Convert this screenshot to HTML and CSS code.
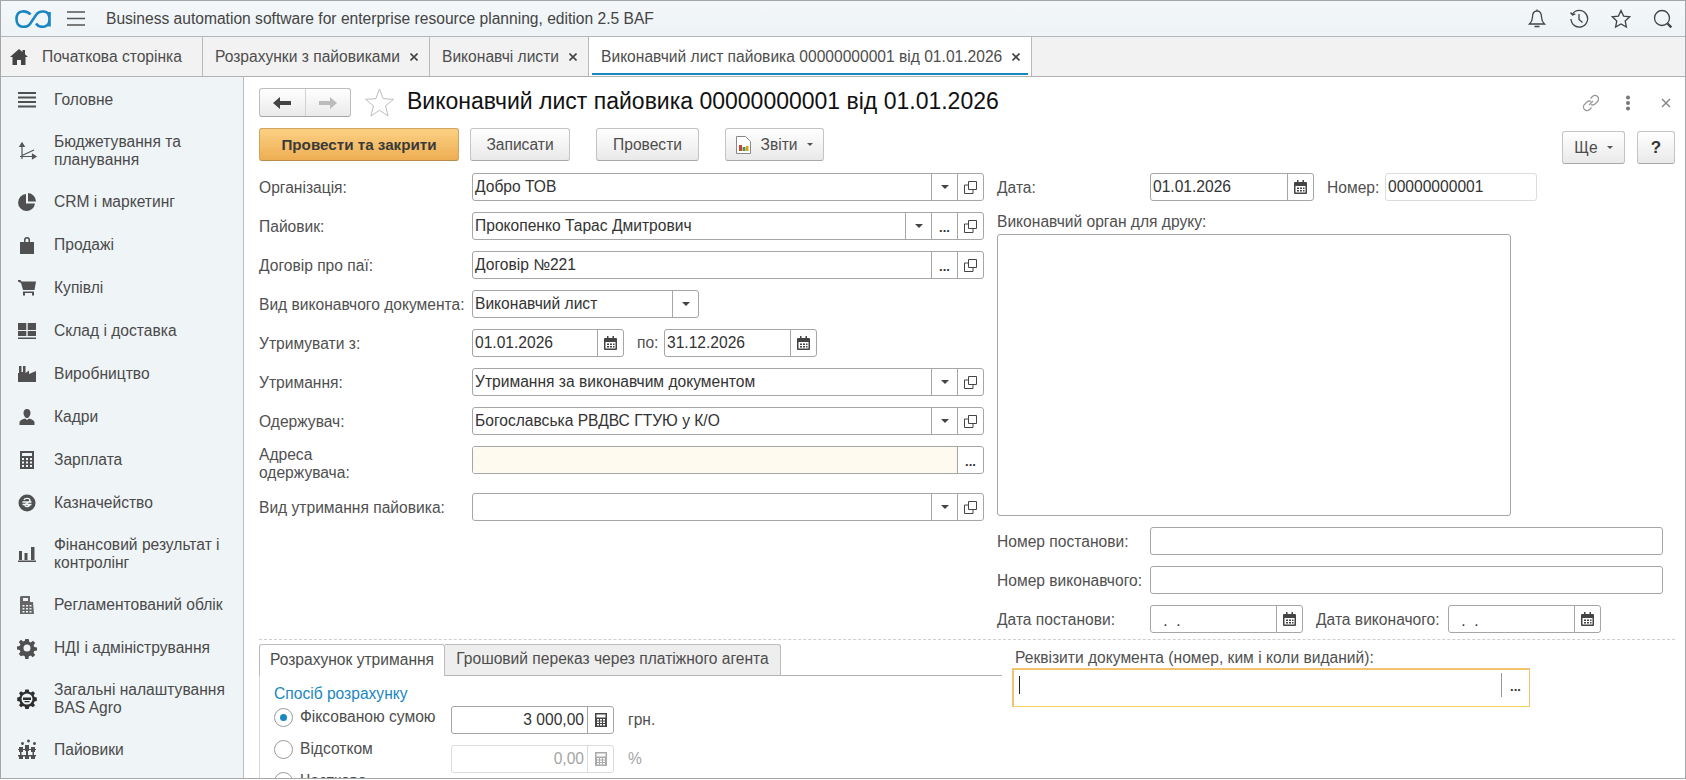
FILE: index.html
```html
<!DOCTYPE html>
<html lang="uk">
<head>
<meta charset="utf-8">
<title>Виконавчий лист пайовика</title>
<link rel="stylesheet" href="styles.css">
</head>
<body>
<div class="app">
  <header class="topbar">
    <svg class="logo" viewBox="0 0 36 18" width="36" height="18"><path d="M15.500 4.500C12 .5 1.500-1 1.500 9S12 18 15 14l6-9c3-4.500 13.500-6 13.500 4S24 18 21 13.500M34.500 2v14.500" fill="none" stroke="#1a86c2" stroke-width="2.600"/></svg>
    <svg class="burger" viewBox="0 0 18 15" width="18" height="15"><path d="M0 1h18M0 7.500h18M0 14h18" stroke="#555" stroke-width="1.300"/></svg>
    <div class="apptitle">Business automation software for enterprise resource planning, edition 2.5 BAF</div>
    <div class="topicons">
      <svg viewBox="0 0 20 20" width="20" height="20"><path d="M10 2c-3.500 0-4.500 3-4.500 6 0 3-1 5-3 7h15c-2-2-3-4-3-7 0-3-1-6-4.500-6zM10 .5V2M7.500 17.500h5" fill="none" stroke="#444" stroke-width="1.300"/></svg>
      <svg viewBox="0 0 20 20" width="20" height="20"><path d="M3.500 5A8.300 8.300 0 1 1 2 10M1.500 3.500 3.500 6l2.800-1.200M10 5v5.500l3.500 3" fill="none" stroke="#444" stroke-width="1.300"/></svg>
      <svg viewBox="0 0 20 20" width="20" height="20"><path d="m10 1.500 2.600 5.600 6.100.7-4.500 4.200 1.200 6.100L10 15l-5.400 3.100 1.200-6.100L1.300 7.800l6.100-.7z" fill="none" stroke="#444" stroke-width="1.300"/></svg>
      <svg viewBox="0 0 20 20" width="20" height="20"><circle cx="9" cy="9" r="7.500" fill="none" stroke="#444" stroke-width="1.300"/><path d="m14.500 14.500 3.800 3.800" stroke="#444" stroke-width="2.400"/></svg>
    </div>
  </header>

  <nav class="tabs">
    <div class="tab tab-home">
      <svg viewBox="0 0 18 16" width="18" height="16"><path d="M9 0 0 8h2.500v8h4.500v-5h4v5h4.500V8H18l-3-2.700V1h-2.500v2.100z" fill="#444"/></svg>
      <span>Початкова сторінка</span>
    </div>
    <div class="tab"><span>Розрахунки з пайовиками</span><svg class="x" viewBox="0 0 8 8" width="8" height="8"><path d="m.5.500 7 7m0-7-7 7" stroke="#444" stroke-width="1.600"/></svg></div>
    <div class="tab"><span>Виконавчі листи</span><svg class="x" viewBox="0 0 8 8" width="8" height="8"><path d="m.5.500 7 7m0-7-7 7" stroke="#444" stroke-width="1.600"/></svg></div>
    <div class="tab tab-active"><span>Виконавчий лист пайовика 00000000001 від 01.01.2026</span><svg class="x" viewBox="0 0 8 8" width="8" height="8"><path d="m.5.500 7 7m0-7-7 7" stroke="#444" stroke-width="1.600"/></svg></div>
  </nav>

  <div class="main">
    <aside class="sidebar">
      <div class="item"><svg viewBox="0 0 18 18"><path d="M0 1h18v2H0zM0 5.500h18v2H0zM0 10h18v2H0zM0 14.500h18v2H0z"/></svg><span>Головне</span></div>
      <div class="item item2"><svg viewBox="0 0 18 18"><path d="M4 17V2M1.800 4.500 4 1l2.200 3.500zM2 14.500h15M14.500 12.300 18 14.500l-3.500 2.200zM4 13.500 16 8" fill="#555" stroke="#555" stroke-width="1.200"/></svg><span>Бюджетування та планування</span></div>
      <div class="item"><svg viewBox="0 0 18 18"><path d="M8 1a8.500 8.500 0 1 0 9 9.500H8zM10 0v8.500h8A8.500 8.500 0 0 0 10 0z"/></svg><span>CRM і маркетинг</span></div>
      <div class="item"><svg viewBox="0 0 18 18"><path d="M6 6V4a3 3 0 0 1 6 0v2h4v12H2V6zm1.500 0h3V4a1.500 1.500 0 0 0-3 0z"/></svg><span>Продажі</span></div>
      <div class="item"><svg viewBox="0 0 18 18"><path d="M0 1h2.500l1 1.500H18l-1.500 8.500H5L3 4 0 2.500zM5 12.500h11V14H5zM5 14h2v2.500H5zM14 14h2v2.500h-2z"/></svg><span>Купівлі</span></div>
      <div class="item"><svg viewBox="0 0 18 18"><path d="M0 1h8.300v7H0zM9.700 1H18v7H9.700zM0 9h8.300v5H0zM9.700 9H18v5H9.700zM0 15.500h18V17H0z"/></svg><span>Склад і доставка</span></div>
      <div class="item"><svg viewBox="0 0 18 18"><path d="M1 1h2.500v6H5V1h2.500v7L11 5.500V9l7-3v11H0V8h1z"/></svg><span>Виробництво</span></div>
      <div class="item"><svg viewBox="0 0 18 18"><path d="M9 1c2.500 0 3.500 1.800 3.500 4S11 10 9 10 5.500 7.200 5.500 5 6.500 1 9 1zM7 10.500l2 1.500 2-1.500c3.500.800 5.500 2.500 5.500 4V17h-15v-2.500c0-1.500 2-3.200 5.500-4z"/></svg><span>Кадри</span></div>
      <div class="item"><svg viewBox="0 0 18 18"><path fill-rule="evenodd" d="M2 0h14v18H2zM4 2v3h10V2zM4 7v2h2V7zm4 0v2h2V7zm4 0v2h2V7zm-8 3.500v2h2v-2zm4 0v2h2v-2zm4 0v2h2v-2zM4 14v2h2v-2zm4 0v2h2v-2zm4 0v2h2v-2z"/></svg><span>Зарплата</span></div>
      <div class="item"><svg viewBox="0 0 18 18"><circle cx="9" cy="9" r="8.500"/><path d="M6 6c.500-2 5.500-2.500 6 0 .3 2-3 3-4.500 4-1.500 1 0 3 2 2.500 1-.2 2-.8 2.500-1.500M4.500 8h9M4.500 10.500h9" fill="none" stroke="#f0f5f8" stroke-width="1.300"/></svg><span>Казначейство</span></div>
      <div class="item item2"><svg viewBox="0 0 18 18"><path d="M1 6h3v9H1zM6.500 8h3v7h-3zM13 2h3.500v13H13zM0 15.500h18V17H0z"/></svg><span>Фінансовий результат і контролінг</span></div>
      <div class="item"><svg viewBox="0 0 18 18"><path fill-rule="evenodd" d="M3 0h9v6h3l1 12H2V1zm2 2v3h5V2zM4.500 9v1.500h2V9zm3.500 0v1.500h2V9zm3.500 0v1.500h2V9zm-7 3v1.500h2V12zM8 12v1.500h2V12zm3.500 0v1.500h2V12zm-7 3v1.500h2V15zM8 15v1.500h2V15zm3.500 0v1.500h2V15z" fill="#666"/></svg><span>Регламентований облік</span></div>
      <div class="item"><svg viewBox="0 0 18 18"><path fill-rule="evenodd" d="M7.300 0h3.400l.5 2.700 1.600.7L15 1.800 17.200 4l-1.600 2.300.7 1.700 2.700.500v3l-2.700.500-.7 1.700 1.600 2.300-2.400 2.200-2.200-1.600-1.700.7-.5 2.700H7.300l-.5-2.700-1.700-.7L3 17.200.8 15l1.600-2.300-.7-1.700L-1 10.500v-3L1.700 7l.7-1.700L.8 3 3 .8l2.200 1.600 1.600-.7zM9 5.500a3.500 3.500 0 1 0 0 7 3.500 3.500 0 0 0 0-7z"/></svg><span>НДІ і адміністрування</span></div>
      <div class="item item2"><svg viewBox="0 0 18 18"><path fill="#2e2e2e" fill-rule="evenodd" d="M7.300-.5h3.400l.5 2.300 1.800.8L15 1.300l2 2-1.300 2 .8 1.800 2.300.5v3.400l-2.300.5-.8 1.800 1.300 2-2 2-2-1.300-1.800.8-.5 2.300H7.300l-.5-2.300-1.800-.8-2 1.300-2-2 1.300-2-.8-1.800-2.300-.5V7.600l2.300-.5.8-1.800-1.300-2 2-2 2 1.300 1.800-.8zM9 3.500a5.500 5.500 0 1 0 0 11 5.500 5.500 0 0 0 0-11zM5 7.500h8v2.500H5zM6.500 11h5v1.200h-5z"/></svg><span>Загальні налаштування BAS Agro</span></div>
      <div class="item"><svg viewBox="0 0 18 18"><path d="M3 2.500a1.500 1.500 0 1 1 0 .01zM9 0a1.500 1.500 0 1 1 0 .01zM15 2.500a1.500 1.500 0 1 1 0 .01zM1 6h4v5H1zM7 4h4v6H7zM13 6h4v5h-4zM2 11h1.500v3H2zM8 10h2v4H8zM14.500 11H16v3h-1.500zM0 14h18v1.500H0zM1 15.500h4V18H1zM7 15.500h4V18H7zM13 15.500h4V18h-4zM0 8h18v1H0z"/></svg><span>Пайовики</span></div>
    </aside>

    <main class="content">
      <div class="head">
        <div class="navbtns">
          <div class="navbtn"><svg viewBox="0 0 18 12" width="18" height="12"><path d="M0 6 7 0v4h11v4H7v4z" fill="#444"/></svg></div>
          <div class="navbtn"><svg viewBox="0 0 18 12" width="18" height="12"><path d="M18 6 11 0v4H0v4h11v4z" fill="#bbb"/></svg></div>
        </div>
        <svg class="favstar" viewBox="0 0 29 29" width="29" height="29"><path d="m14.500 1 3.700 9.700 10.300.6-8 6.600 2.600 10.100-8.600-5.700L5.900 28 8.500 17.900.5 11.300l10.300-.6z" fill="#fff" stroke="#bdbdbd"/></svg>
        <h1 class="title">Виконавчий лист пайовика 00000000001 від 01.01.2026</h1>
        <div class="headicons">
          <svg class="i-link" viewBox="0 0 20 20" width="20" height="20"><path d="M8 12l4-4M9.500 5.500l2-2a3.500 3.500 0 0 1 5 5l-2.500 2.500a3.500 3.500 0 0 1-4 .5M10.500 14.500l-2 2a3.500 3.500 0 0 1-5-5L6 9a3.500 3.500 0 0 1 4-.5" fill="none" stroke="#999" stroke-width="1.300"/></svg>
          <svg class="i-dots" viewBox="0 0 6 16" width="6" height="16"><path d="M3 .5a2 2 0 1 1 0 4 2 2 0 0 1 0-4zM3 6a2 2 0 1 1 0 4 2 2 0 0 1 0-4zM3 11.500a2 2 0 1 1 0 4 2 2 0 0 1 0-4z" fill="#777"/></svg>
          <svg class="i-x" viewBox="0 0 10 10" width="10" height="10"><path d="m1 1 8 8m0-8-8 8" stroke="#888" stroke-width="1.500"/></svg>
        </div>
      </div>

      <div class="toolbar">
        <div class="btn btn-primary w-post">Провести та закрити</div>
        <div class="btn w-save">Записати</div>
        <div class="btn w-posts">Провести</div>
        <div class="btn w-rep">
          <svg viewBox="0 0 15 18" width="15" height="18"><path d="M.5.500h9l5 5v12H.5z" fill="#fff" stroke="#888"/><path d="M3 9h3v6H3z" fill="#c9433a"/><path d="M6.500 11h3v4h-3z" fill="#4a9a45"/><path d="M10 10h2.500v5H10z" fill="#d8a020"/></svg>
          <span>Звіти</span><i class="caret"></i>
        </div>
        <div class="btn btn-sub w-more"><span>Ще</span><i class="caret"></i></div>
        <div class="btn btn-sub btn-help">?</div>
      </div>

      <div class="form">
        <section class="col-left">
          <div class="row"><label class="lbl">Організація:</label><div class="field grow"><span class="val">Добро ТОВ</span><b class="fb"><i class="caret dark"></i></b><b class="fb"><svg class="open" viewBox="0 0 13 13" width="13" height="13"><path d="M4.500.5h8v8h-8zM4.500 4H.5v8.500H9V8.500" fill="none" stroke="#444"/></svg></b></div></div>
          <div class="row"><label class="lbl">Пайовик:</label><div class="field grow"><span class="val">Прокопенко Тарас Дмитрович</span><b class="fb"><i class="caret dark"></i></b><b class="fb dots">...</b><b class="fb"><svg class="open" viewBox="0 0 13 13" width="13" height="13"><path d="M4.500.5h8v8h-8zM4.500 4H.5v8.500H9V8.500" fill="none" stroke="#444"/></svg></b></div></div>
          <div class="row"><label class="lbl">Договір про паї:</label><div class="field grow"><span class="val">Договір №221</span><b class="fb dots">...</b><b class="fb"><svg class="open" viewBox="0 0 13 13" width="13" height="13"><path d="M4.500.5h8v8h-8zM4.500 4H.5v8.500H9V8.500" fill="none" stroke="#444"/></svg></b></div></div>
          <div class="row"><label class="lbl">Вид виконавчого документа:</label><div class="field w-vid"><span class="val">Виконавчий лист</span><b class="fb"><i class="caret dark"></i></b></div></div>
          <div class="row"><label class="lbl">Утримувати з:</label><div class="field w-d1"><span class="val">01.01.2026</span><b class="fb"><svg class="cal" viewBox="0 0 13 14" width="13" height="14"><path fill-rule="evenodd" d="M1 2h2V0h1.500v2h4V0H10v2h2a1 1 0 0 1 1 1v10a1 1 0 0 1-1 1H1a1 1 0 0 1-1-1V3a1 1 0 0 1 1-1zm.5 4v6.500h10V6zM3 7.500h2V9H3zm3 0h2V9H6zm3 0h1.500V9H9zM3 10h2v1.500H3zm3 0h2v1.500H6zm3 0h1.500v1.500H9z" fill="#444"/></svg></b></div><span class="mid">по:</span><div class="field w-d2"><span class="val">31.12.2026</span><b class="fb"><svg class="cal" viewBox="0 0 13 14" width="13" height="14"><path fill-rule="evenodd" d="M1 2h2V0h1.500v2h4V0H10v2h2a1 1 0 0 1 1 1v10a1 1 0 0 1-1 1H1a1 1 0 0 1-1-1V3a1 1 0 0 1 1-1zm.5 4v6.500h10V6zM3 7.500h2V9H3zm3 0h2V9H6zm3 0h1.500V9H9zM3 10h2v1.500H3zm3 0h2v1.500H6zm3 0h1.500v1.500H9z" fill="#444"/></svg></b></div></div>
          <div class="row"><label class="lbl">Утримання:</label><div class="field grow"><span class="val">Утримання за виконавчим документом</span><b class="fb"><i class="caret dark"></i></b><b class="fb"><svg class="open" viewBox="0 0 13 13" width="13" height="13"><path d="M4.500.5h8v8h-8zM4.500 4H.5v8.500H9V8.500" fill="none" stroke="#444"/></svg></b></div></div>
          <div class="row"><label class="lbl">Одержувач:</label><div class="field grow"><span class="val">Богославська РВДВС ГТУЮ у К/О</span><b class="fb"><i class="caret dark"></i></b><b class="fb"><svg class="open" viewBox="0 0 13 13" width="13" height="13"><path d="M4.500.5h8v8h-8zM4.500 4H.5v8.500H9V8.500" fill="none" stroke="#444"/></svg></b></div></div>
          <div class="row row-addr"><label class="lbl lbl2">Адреса одержувача:</label><div class="field grow"><span class="val val-warn"></span><b class="fb dots">...</b></div></div>
          <div class="row"><label class="lbl">Вид утримання пайовика:</label><div class="field grow"><span class="val"></span><b class="fb"><i class="caret dark"></i></b><b class="fb"><svg class="open" viewBox="0 0 13 13" width="13" height="13"><path d="M4.500.5h8v8h-8zM4.500 4H.5v8.500H9V8.500" fill="none" stroke="#444"/></svg></b></div></div>
        </section>

        <section class="col-right">
          <div class="row"><label class="lbl-r">Дата:</label><div class="field w-date"><span class="val">01.01.2026</span><b class="fb"><svg class="cal" viewBox="0 0 13 14" width="13" height="14"><path fill-rule="evenodd" d="M1 2h2V0h1.500v2h4V0H10v2h2a1 1 0 0 1 1 1v10a1 1 0 0 1-1 1H1a1 1 0 0 1-1-1V3a1 1 0 0 1 1-1zm.5 4v6.500h10V6zM3 7.500h2V9H3zm3 0h2V9H6zm3 0h1.500V9H9zM3 10h2v1.500H3zm3 0h2v1.500H6zm3 0h1.500v1.500H9z" fill="#444"/></svg></b></div><span class="lbl-num">Номер:</span><div class="field field-soft w-num"><span class="val">00000000001</span></div></div>
          <div class="toplabel">Виконавчий орган для друку:</div>
          <div class="field textarea"></div>
          <div class="row row-post"><label class="lbl-r">Номер постанови:</label><div class="field w-wide"><span class="val"></span></div></div>
          <div class="row"><label class="lbl-r">Номер виконавчого:</label><div class="field w-wide"><span class="val"></span></div></div>
          <div class="row"><label class="lbl-r">Дата постанови:</label><div class="field w-dp"><span class="val dotsval">&nbsp;.&nbsp;&nbsp;.</span><b class="fb"><svg class="cal" viewBox="0 0 13 14" width="13" height="14"><path fill-rule="evenodd" d="M1 2h2V0h1.500v2h4V0H10v2h2a1 1 0 0 1 1 1v10a1 1 0 0 1-1 1H1a1 1 0 0 1-1-1V3a1 1 0 0 1 1-1zm.5 4v6.500h10V6zM3 7.500h2V9H3zm3 0h2V9H6zm3 0h1.500V9H9zM3 10h2v1.500H3zm3 0h2v1.500H6zm3 0h1.500v1.500H9z" fill="#444"/></svg></b></div><span class="lbl-dv">Дата виконачого:</span><div class="field w-dp"><span class="val dotsval">&nbsp;.&nbsp;&nbsp;.</span><b class="fb"><svg class="cal" viewBox="0 0 13 14" width="13" height="14"><path fill-rule="evenodd" d="M1 2h2V0h1.500v2h4V0H10v2h2a1 1 0 0 1 1 1v10a1 1 0 0 1-1 1H1a1 1 0 0 1-1-1V3a1 1 0 0 1 1-1zm.5 4v6.500h10V6zM3 7.500h2V9H3zm3 0h2V9H6zm3 0h1.500V9H9zM3 10h2v1.500H3zm3 0h2v1.500H6zm3 0h1.500v1.500H9z" fill="#444"/></svg></b></div></div>
        </section>
      </div>

      <div class="lower">
        <section class="lower-left">
          <div class="ltabs">
            <div class="ltab ltab-on">Розрахунок утримання</div>
            <div class="ltab">Грошовий переказ через платіжного агента</div>
          </div>
          <div class="panel">
            <div class="group">Спосіб розрахунку</div>
            <div class="calc">
              <div class="radios">
                <div class="radio"><i class="dot dot-on"></i><span>Фіксованою сумою</span></div>
                <div class="radio"><i class="dot"></i><span>Відсотком</span></div>
                <div class="radio"><i class="dot"></i><span>Частково</span></div>
              </div>
              <div class="amounts">
                <div class="row"><div class="field w-amt"><span class="val num">3 000,00</span><b class="fb"><svg class="calc-i" viewBox="0 0 12 14" width="12" height="14"><path fill-rule="evenodd" d="M0 0h12v14H0zM1.500 1.500v3h9v-3zM2 6v1.500h2V6zm3 0v1.500h2V6zm3 0v1.500h2V6zM2 8.500V10h2V8.500zm3 0V10h2V8.500zm3 0V10h2V8.500zM2 11v1.500h2V11zm3 0v1.500h2V11zm3 0v1.500h2V11z" fill="#444"/></svg></b></div><span class="unit">грн.</span></div>
                <div class="row"><div class="field field-soft w-amt off"><span class="val num">0,00</span><b class="fb"><svg class="calc-i" viewBox="0 0 12 14" width="12" height="14"><path fill-rule="evenodd" d="M0 0h12v14H0zM1.500 1.500v3h9v-3zM2 6v1.500h2V6zm3 0v1.500h2V6zM8 6v1.500h2V6zM2 8.500V10h2V8.500zm3 0V10h2V8.500zm3 0V10h2V8.500zM2 11v1.500h2V11zm3 0v1.500h2V11zm3 0v1.500h2V11z" fill="#aaa"/></svg></b></div><span class="unit off">%</span></div>
              </div>
            </div>
          </div>
        </section>
        <section class="lower-right">
          <div class="req-label">Реквізити документа (номер, ким і коли виданий):</div>
          <div class="focus"><span class="cursor"></span><b class="fb-focus dots">...</b></div>
        </section>
      </div>
    </main>
  </div>
</div>
</body>
</html>
```
FILE: styles.css
```css
* { box-sizing: border-box; }
html, body { margin: 0; padding: 0; background: #fff; }
body { font-family: "Liberation Sans", Arial, sans-serif; font-size: 15.6px; color: #4d4d4d; }
.app { width: 1686px; height: 779px; border: 1px solid #a3a7a9; display: flex; flex-direction: column; overflow: hidden; }

.topbar { flex: none; height: 36px; background: linear-gradient(#f4f7f9, #edf3f6); border-bottom: 1px solid #b3b7b9; display: flex; align-items: center; }
.logo { margin-left: 14px; flex: none; }
.burger { margin-left: 16px; flex: none; }
.apptitle { margin-left: 21px; color: #444; white-space: nowrap; }
.topicons { margin-left: auto; display: flex; gap: 22px; align-items: center; padding-right: 12px; }

.tabs { flex: none; height: 40px; background: #f2f2f2; border-bottom: 1px solid #b0b2b4; display: flex; }
.tab { position: relative; display: flex; align-items: center; padding: 0 11px 0 12px; gap: 10px; border-right: 1px solid #b9b9b9; color: #4d4d4d; white-space: nowrap; }
.tab-home { padding-left: 9px; padding-right: 20px; gap: 14px; }
.tab-active { background: #fff; }
.tab-active::after { content: ""; position: absolute; left: 3px; right: 3px; bottom: 1px; height: 2px; background: #1a86c2; }
.x { flex: none; }

.main { flex: 1; min-height: 0; display: flex; }
.sidebar { flex: none; width: 243px; background: #eff4f7; border-right: 1px solid #b9bcbe; padding-top: 1px; overflow: hidden; }
.item { height: 43px; display: flex; align-items: center; gap: 18px; padding-left: 17px; color: #4a4a4a; line-height: 18px; }
.item2 { height: 59px; }
.item svg { flex: none; width: 18px; height: 18px; fill: #505050; overflow: visible; }
.item span { flex: 1; padding-right: 12px; }

.content { flex: 1; min-width: 0; padding: 11px 10px 0 15px; overflow: hidden; background: #fff; }

.head { height: 29px; display: flex; align-items: center; }
.navbtns { width: 92px; height: 29px; display: flex; border: 1px solid #bdbdbd; border-bottom-color: #a5a5a5; border-radius: 3px; background: linear-gradient(#fff, #eaeaea); flex: none; }
.navbtn { flex: 1; display: flex; align-items: center; justify-content: center; }
.navbtn + .navbtn { border-left: 1px solid #d2d2d2; }
.favstar { margin-left: 14px; flex: none; }
.title { margin: -2px 0 0 13px; font-size: 23px; font-weight: 400; color: #111; white-space: nowrap; }
.headicons { margin-left: auto; display: flex; align-items: center; padding-right: 4px; }
.i-dots { margin-left: 24px; }
.i-x { margin-left: 30px; }

.toolbar { margin-top: 11px; height: 36px; display: flex; align-items: flex-start; }
.btn { height: 33px; display: flex; align-items: center; justify-content: center; border: 1px solid #c4c4c4; border-bottom-color: #a8a8a8; border-radius: 3px; background: linear-gradient(#fff, #e9e9e9); color: #4d4d4d; gap: 9px; flex: none; }
.btn-primary { background: linear-gradient(#fbd083, #eeae52); border-color: #d0a45e; border-bottom-color: #b98d47; color: #3a3a3a; font-weight: 700; font-size: 15.2px; }
.w-post { width: 200px; }
.w-save { width: 100px; margin-left: 11px; }
.w-posts { width: 103px; margin-left: 26px; }
.w-rep { width: 99px; margin-left: 26px; }
.btn-sub { margin-top: 3px; }
.w-more { width: 63px; margin-left: auto; }
.btn-help { width: 38px; margin-left: 12px; font-size: 17px; font-weight: 700; color: #333; }
.caret { display: inline-block; width: 0; height: 0; border-left: 3px solid transparent; border-right: 3px solid transparent; border-top: 3px solid #555; }
.caret.dark { border-left-width: 4px; border-right-width: 4px; border-top-width: 4px; border-top-color: #444; }

.form { margin-top: 9px; display: flex; gap: 13px; }
.col-left { width: 725px; flex: none; display: flex; flex-direction: column; gap: 11px; }
.col-right { flex: 1; min-width: 0; display: flex; flex-direction: column; gap: 11px; }
.row { display: flex; align-items: center; height: 28px; }
.row-addr { height: 36px; align-items: flex-start; }
.lbl { width: 213px; flex: none; color: #505050; white-space: nowrap; padding-top: 1px; }
.lbl2 { width: 120px; margin-right: 93px; line-height: 18px; white-space: normal; padding-top: 0; }
.lbl-r { width: 153px; flex: none; color: #505050; white-space: nowrap; padding-top: 1px; }
.lbl-num { width: 58px; margin-left: 13px; flex: none; color: #505050; padding-top: 1px; }
.lbl-dv { width: 132px; margin-left: 13px; flex: none; white-space: nowrap; color: #505050; padding-top: 1px; }
.mid { width: 40px; flex: none; padding-left: 13px; color: #505050; }

.field { height: 28px; display: flex; border: 1px solid #a6a6a6; border-radius: 3px; background: #fff; overflow: hidden; flex: none; }
.grow { flex: 1; min-width: 0; }
.val { flex: 1; min-width: 0; padding: 0 3px 0 2px; line-height: 26px; color: #333; white-space: nowrap; }
.val-warn { background: #fefaf0; }
.num { text-align: right; }
.fb { flex: none; width: 26px; border-left: 1px solid #a6a6a6; display: flex; align-items: center; justify-content: center; font-weight: 400; color: #333; }
.dots { font-weight: 700; font-size: 13px; letter-spacing: 0; padding-top: 3px; }
.field-soft { border-color: #dcdcdc; }
.field-soft .fb { border-left-color: #dcdcdc; }
.w-vid { width: 227px; }
.w-d1 { width: 152px; }
.w-d2 { width: 153px; }
.w-date { width: 164px; }
.w-num { width: 152px; }
.w-wide { width: 513px; }
.w-dp { width: 153px; }
.w-amt { width: 163px; }
.dotsval { padding-left: 8px; line-height: 30px; }

.toplabel { height: 22px; line-height: 20px; color: #505050; white-space: nowrap; margin-bottom: -11px; }
.textarea { width: 514px; height: 282px; }

.lower { margin-top: 6px; border-top: 1px dashed #cfcfcf; padding-top: 4px; display: flex; }
.lower-left { width: 743px; flex: none; }
.ltabs { display: flex; height: 32px; border-bottom: 1px solid #b3b3b3; align-items: flex-end; }
.ltab { height: 31px; width: 336px; line-height: 28px; text-align: center; background: #eee; border: 1px solid #bcbcbc; border-left: none; border-bottom: none; border-radius: 0 3px 0 0; color: #4d4d4d; white-space: nowrap; }
.ltab-on { height: 32px; margin-bottom: -1px; width: 186px; background: #fff; border-left: 1px solid #bcbcbc; border-radius: 3px 3px 0 0; line-height: 30px; }
.panel { border-left: 1px solid #d8d8d8; padding: 10px 0 0 14px; height: 120px; }
.group { height: 16px; line-height: 16px; color: #1a86c2; }
.calc { display: flex; margin-top: -1px; }
.radios { width: 177px; flex: none; display: flex; flex-direction: column; }
.radio { height: 32px; display: flex; align-items: center; gap: 7px; color: #4d4d4d; white-space: nowrap; }
.dot { flex: none; width: 19px; height: 19px; border: 1px solid #9b9b9b; border-radius: 50%; background: #fff; display: flex; align-items: center; justify-content: center; }
.dot-on::before { content: ""; width: 7px; height: 7px; border-radius: 50%; background: #1a86c2; }
.amounts { margin-top: 5px; display: flex; flex-direction: column; gap: 11px; }
.unit { margin-left: 14px; color: #505050; }
.off, .off .val { color: #a5a5a5; }

.lower-right { margin-left: 10px; width: 518px; flex: none; padding-top: 5px; }
.req-label { height: 19px; line-height: 18px; padding-left: 3px; color: #505050; white-space: nowrap; }
.focus { height: 39px; border: 1px solid #f3c26f; border-width: 2px 1px 1px 2px; border-bottom-color: #f6d35f; display: flex; align-items: flex-start; padding-top: 2px; }
.cursor { width: 1px; height: 18px; background: #222; margin: 4px 0 0 5px; }
.fb-focus { margin-left: auto; width: 28px; height: 24px; border-left: 1px solid #9a9a9a; display: flex; align-items: center; justify-content: center; margin-top: 1px; color: #333; }
```
